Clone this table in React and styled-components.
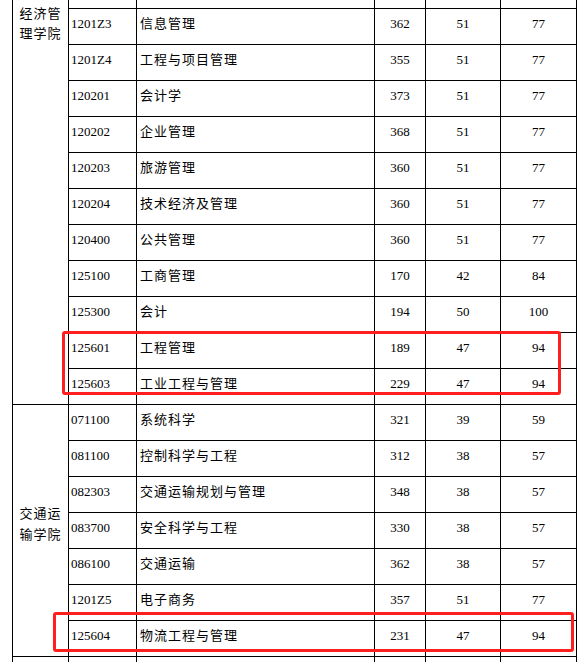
import React from 'react';
import styled, { createGlobalStyle } from 'styled-components';

const GlobalStyle = createGlobalStyle`
  html, body {
    margin: 0;
    padding: 0;
    background: #fff;
  }
`;

const Page = styled.div`
  position: relative;
  width: 585px;
  height: 662px;
  overflow: hidden;
  background: #fff;
  padding-left: 12px;
  box-sizing: border-box;
`;

const Table = styled.table`
  border-collapse: collapse;
  table-layout: fixed;
  margin-top: -28px;
  font-family: "Liberation Serif", "Noto Sans CJK SC", serif;
  font-size: 13px;
  line-height: 16px;
  color: #000;
`;

const Cell = styled.td`
  border: 1px solid #000;
  height: 29px;
  padding: 0 0 6px ${(p) => p.$pad || 0}px;
  text-align: ${(p) => p.$align || 'left'};
  vertical-align: middle;
  white-space: nowrap;
  overflow: hidden;
`;

const NameText = styled.span`
  font-family: "Noto Sans CJK SC", sans-serif;
  letter-spacing: 1px;
`;

const GroupCell = styled.td`
  border: 1px solid #000;
  padding: ${(p) => (p.$top ? '30px 5px 0' : '0 5px 15px')};
  vertical-align: ${(p) => (p.$top ? 'top' : 'middle')};
  text-align: center;
  font-family: "Noto Sans CJK SC", sans-serif;
  letter-spacing: 1px;
  line-height: ${(p) => (p.$top ? 20 : 21)}px;
`;

const Mark = styled.div`
  position: absolute;
  left: ${(p) => p.$x}px;
  top: ${(p) => p.$y}px;
  width: ${(p) => p.$w}px;
  height: ${(p) => p.$h}px;
  border: 3px solid #ff1f1f;
  border-radius: 3px;
  box-sizing: border-box;
  pointer-events: none;
`;

const economics = [
  ['1201Z3', '信息管理', 362, 51, 77],
  ['1201Z4', '工程与项目管理', 355, 51, 77],
  ['120201', '会计学', 373, 51, 77],
  ['120202', '企业管理', 368, 51, 77],
  ['120203', '旅游管理', 360, 51, 77],
  ['120204', '技术经济及管理', 360, 51, 77],
  ['120400', '公共管理', 360, 51, 77],
  ['125100', '工商管理', 170, 42, 84],
  ['125300', '会计', 194, 50, 100],
  ['125601', '工程管理', 189, 47, 94],
  ['125603', '工业工程与管理', 229, 47, 94],
];

const transport = [
  ['071100', '系统科学', 321, 39, 59],
  ['081100', '控制科学与工程', 312, 38, 57],
  ['082303', '交通运输规划与管理', 348, 38, 57],
  ['083700', '安全科学与工程', 330, 38, 57],
  ['086100', '交通运输', 362, 38, 57],
  ['1201Z5', '电子商务', 357, 51, 77],
  ['125604', '物流工程与管理', 231, 47, 94],
];

const DataCells = ({ row }) => (
  <>
    <Cell $pad={2}>{row[0]}</Cell>
    <Cell $pad={3}>
      <NameText>{row[1]}</NameText>
    </Cell>
    <Cell $align="center">{row[2]}</Cell>
    <Cell $align="center">{row[3]}</Cell>
    <Cell $align="center">{row[4]}</Cell>
  </>
);

const App = () => (
  <>
    <GlobalStyle />
    <Page>
      <Table>
        <colgroup>
          <col style={{ width: 56 }} />
          <col style={{ width: 68 }} />
          <col style={{ width: 238 }} />
          <col style={{ width: 51 }} />
          <col style={{ width: 75 }} />
          <col style={{ width: 76 }} />
        </colgroup>
        <tbody>
          <tr>
            <GroupCell $top rowSpan={economics.length + 1}>
              经济管理学院
            </GroupCell>
            <Cell />
            <Cell />
            <Cell />
            <Cell />
            <Cell />
          </tr>
          {economics.map((row) => (
            <tr key={row[0]}>
              <DataCells row={row} />
            </tr>
          ))}
          {transport.map((row, i) => (
            <tr key={row[0]}>
              {i === 0 && (
                <GroupCell rowSpan={transport.length}>交通运输学院</GroupCell>
              )}
              <DataCells row={row} />
            </tr>
          ))}
          <tr>
            <Cell />
            <Cell />
            <Cell />
            <Cell />
            <Cell />
            <Cell />
          </tr>
        </tbody>
      </Table>
      <Mark $x={62} $y={331} $w={499} $h={64} />
      <Mark $x={53} $y={612} $w={521} $h={40} />
    </Page>
  </>
);

export default App;
